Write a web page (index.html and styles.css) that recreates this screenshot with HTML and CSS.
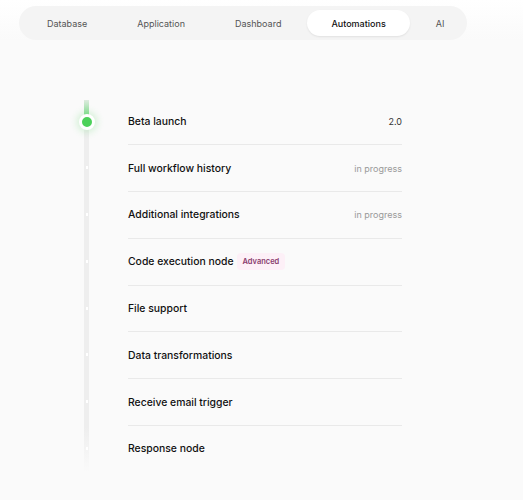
FILE: index.html
```
<!DOCTYPE html>
<html lang="en">
<head>
    <meta charset="UTF-8">
    <meta name="viewport" content="width=device-width, initial-scale=1.0">
    <title>Roadmap</title>
    <link rel="stylesheet" href="styles.css">
</head>
<body>

    <div class="top">
        <nav class="tabs">
            <button class="tab">Database</button>
            <button class="tab">Application</button>
            <button class="tab">Dashboard</button>
            <button class="tab active">Automations</button>
            <button class="tab">AI</button>
        </nav>
    </div>

    <main class="roadmap">
        <div class="track">
            <div class="track-done"></div>
        </div>

        <ul class="items">
            <li class="item current">
                <span class="marker"></span>
                <span class="title">Beta launch</span>
                <span class="meta version">2.0</span>
            </li>
            <li class="item">
                <span class="marker"></span>
                <span class="title">Full workflow history</span>
                <span class="meta">in progress</span>
            </li>
            <li class="item">
                <span class="marker"></span>
                <span class="title">Additional integrations</span>
                <span class="meta">in progress</span>
            </li>
            <li class="item">
                <span class="marker"></span>
                <span class="title">Code execution node <span class="badge">Advanced</span></span>
            </li>
            <li class="item">
                <span class="marker"></span>
                <span class="title">File support</span>
            </li>
            <li class="item">
                <span class="marker"></span>
                <span class="title">Data transformations</span>
            </li>
            <li class="item">
                <span class="marker"></span>
                <span class="title">Receive email trigger</span>
            </li>
            <li class="item last">
                <span class="marker"></span>
                <span class="title">Response node</span>
            </li>
        </ul>
    </main>

</body>
</html>
```

FILE: styles.css
```
body {
    font-family: Inter, 'Liberation Sans', sans-serif;
    margin: 0;
    padding: 0;
    background: #fafafa;
    color: #111;
}

.top {
    background: linear-gradient(#ffffff, #fafafa);
    padding: 6px 0 0 19px;
    height: 40px;
    box-sizing: border-box;
}

.tabs {
    display: inline-flex;
    gap: 2px;
    width: 448px;
    height: 34px;
    box-sizing: border-box;
    padding: 4px;
    background: #f4f4f4;
    border-radius: 17px;
}

.tab {
    font-family: inherit;
    font-size: 9px;
    color: #555;
    background: none;
    border: none;
    padding: 0 24px;
    border-radius: 14px;
    cursor: pointer;
}

.tab.active {
    background: #fff;
    color: #111;
    font-weight: 500;
    box-shadow: 0 1px 2px rgba(0, 0, 0, 0.08);
}

/* timeline */
.roadmap {
    position: relative;
    padding: 58.5px 0 0 128px;
}

.track {
    position: absolute;
    left: 84px;
    top: 60px;
    width: 5px;
    height: 372px;
    background: linear-gradient(#eeeeee 88%, rgba(238, 238, 238, 0));
}

.track-done {
    height: 20px;
    background: linear-gradient(rgba(76, 209, 90, 0.1), #6ad97a);
}

.items {
    list-style: none;
    margin: 0;
    padding: 0;
    width: 274px;
}

.item {
    position: relative;
    display: flex;
    align-items: center;
    justify-content: space-between;
    height: 45.8px;
    border-bottom: 1px solid #e9e9e9;
}

.item.last {
    border-bottom: none;
}

.marker {
    position: absolute;
    left: -42px;
    top: 21px;
    width: 2px;
    height: 3px;
    background: #fff;
}

.current .marker {
    left: -49px;
    top: 15px;
    width: 10px;
    height: 10px;
    border-radius: 50%;
    background: #4cd15a;
    border: 3px solid #fff;
    box-shadow: 0 0 6px 3px rgba(76, 209, 90, 0.18);
}

.title {
    font-size: 10.4px;
    font-weight: 500;
    display: flex;
    align-items: center;
    gap: 3px;
}

.meta {
    font-size: 9px;
    color: #999;
}

.meta.version {
    color: #333;
}

.badge {
    font-size: 7.5px;
    font-weight: 600;
    color: #8a3c6e;
    background: #fdf0f7;
    padding: 4px 6px;
    border-radius: 4px;
}
```
